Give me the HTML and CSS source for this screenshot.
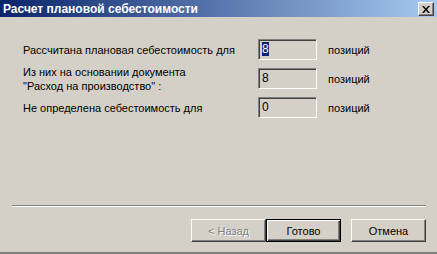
FILE: index.html
```html
<!DOCTYPE html>
<html lang="ru">

<head>
  <meta charset="UTF-8">
  <meta name="viewport" content="width=device-width, initial-scale=1.0">
  <title>Расчет плановой себестоимости</title>
  <link rel="stylesheet" href="styles.css">
</head>

<body>
  <div class="window">
    <div class="titlebar">
      <span class="title">Расчет плановой себестоимости</span>
      <button class="closeBtn" aria-label="Закрыть">
        <svg width="8" height="7" viewBox="0 0 8 7">
          <path d="M0 0h2l2 2.5L6 0h2L5 3.5 8 7H6L4 4.5 2 7H0l3-3.5z" fill="#000" />
        </svg>
      </button>
    </div>

    <div class="content">
      <div class="rows">
        <div class="label">Рассчитана плановая себестоимость для</div>
        <div class="field"><span class="selected">8</span></div>
        <div class="unit">позиций</div>

        <div class="label label-top">Из них на основании документа<br>"Расход на производство" :</div>
        <div class="field">8</div>
        <div class="unit">позиций</div>

        <div class="label">Не определена себестоимость для</div>
        <div class="field">0</div>
        <div class="unit">позиций</div>
      </div>
    </div>

    <div class="separator"></div>

    <div class="buttons">
      <button class="btn" disabled>&lt; Назад</button>
      <button class="btn btn-default">Готово</button>
      <button class="btn btn-cancel">Отмена</button>
    </div>
  </div>
</body>

</html>
```

FILE: styles.css
```css
body {
  margin: 0;
  padding: 0;
  font-family: "Liberation Sans", Arial, sans-serif;
  font-size: 11px;
  background-color: #d4d0c8;
}

.window {
  width: 437px;
  height: 254px;
  box-sizing: border-box;
  border-bottom: 2px solid #808080;
  background-color: #d4d0c8;
  display: flex;
  flex-direction: column;
}

.titlebar {
  height: 17px;
  display: flex;
  align-items: center;
  justify-content: space-between;
  padding: 0 3px 0 3px;
  background: linear-gradient(to right, #0a246a, #a6caf0);
}

.title {
  color: #fff;
  font-weight: bold;
  font-size: 12px;
  letter-spacing: 0;
}

.closeBtn {
  width: 16px;
  height: 14px;
  padding: 0;
  margin-top: 1px;
  display: flex;
  align-items: center;
  justify-content: center;
  background-color: #d4d0c8;
  border: 1px solid;
  border-color: #fff #404040 #404040 #fff;
  box-shadow: inset -1px -1px 0 #808080;
}

.content {
  padding: 22px 0 0 23px;
}

.rows {
  display: grid;
  grid-template-columns: 235px 59px auto;
  row-gap: 4px;
  align-items: center;
  color: #000;
}

.label {
  line-height: 14px;
}

.label-top {
  align-self: start;
  margin-top: 1px;
}

.field {
  height: 21px;
  box-sizing: border-box;
  border: 1px solid;
  border-color: #808080 #fff #fff #808080;
  box-shadow: inset 1px 1px 0 #404040;
  padding: 2px 0 0 3px;
  font-size: 12px;
  line-height: 14px;
}

.selected {
  background-color: #0a246a;
  color: #fff;
}

.unit {
  margin-left: 11px;
}

.separator {
  margin: auto 11px 0 12px;
  border-top: 1px solid #808080;
  border-bottom: 1px solid #fff;
}

.buttons {
  display: flex;
  justify-content: flex-end;
  padding: 12px 11px 10px 0;
}

.btn {
  width: 75px;
  height: 23px;
  padding: 0;
  font-family: "Liberation Sans", Arial, sans-serif;
  font-size: 11px;
  color: #000;
  background-color: #d4d0c8;
  border: 1px solid;
  border-color: #fff #404040 #404040 #fff;
  box-shadow: inset -1px -1px 0 #808080;
}

.btn:disabled {
  color: #808080;
  text-shadow: 1px 1px 0 #fff;
}

.btn-default {
  border: 1px solid #000;
  box-shadow: inset 1px 1px 0 #fff, inset -1px -1px 0 #404040, inset -2px -2px 0 #808080;
}

.btn-cancel {
  margin-left: 10px;
}
```
